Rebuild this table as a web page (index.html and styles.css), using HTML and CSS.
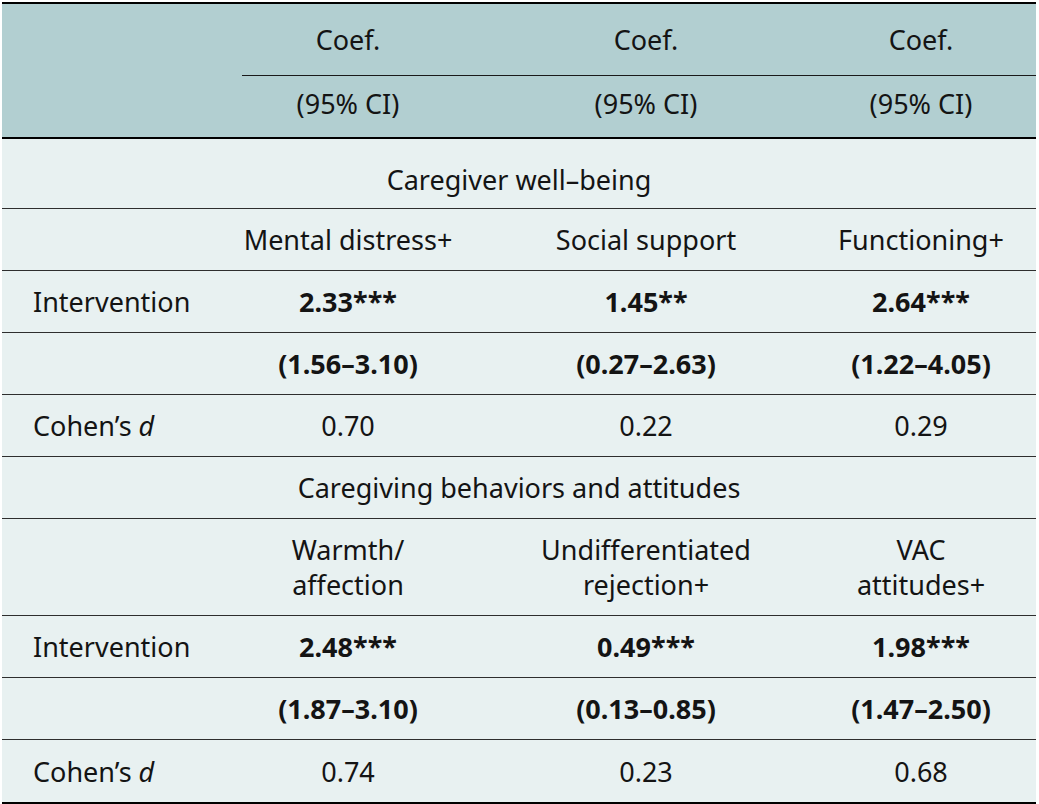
FILE: index.html
```html
<!DOCTYPE html>
<html lang="en">
<head>
<meta charset="utf-8">
<title>Intervention effects</title>
<link rel="stylesheet" href="styles.css">
</head>
<body>
<table class="results">
  <colgroup>
    <col class="c-label">
    <col class="c-one">
    <col class="c-two">
    <col class="c-three">
  </colgroup>
  <thead>
    <tr class="h-coef">
      <th class="blank"></th>
      <th class="val rule">Coef.</th>
      <th class="val rule">Coef.</th>
      <th class="val rule last">Coef.</th>
    </tr>
    <tr class="h-ci">
      <th class="blank"></th>
      <th class="val">(95% CI)</th>
      <th class="val">(95% CI)</th>
      <th class="val last">(95% CI)</th>
    </tr>
  </thead>
  <tbody>
    <tr class="section first">
      <td colspan="4" class="sec">Caregiver well–being</td>
    </tr>
    <tr class="row">
      <td class="label"></td>
      <td class="val">Mental distress+</td>
      <td class="val">Social support</td>
      <td class="val last">Functioning+</td>
    </tr>
    <tr class="row">
      <td class="label">Intervention</td>
      <td class="val b">2.33***</td>
      <td class="val b">1.45**</td>
      <td class="val b last">2.64***</td>
    </tr>
    <tr class="row">
      <td class="label"></td>
      <td class="val b">(1.56–3.10)</td>
      <td class="val b">(0.27–2.63)</td>
      <td class="val b last">(1.22–4.05)</td>
    </tr>
    <tr class="row">
      <td class="label">Cohen’s <i>d</i></td>
      <td class="val">0.70</td>
      <td class="val">0.22</td>
      <td class="val last">0.29</td>
    </tr>
    <tr class="section">
      <td colspan="4" class="sec">Caregiving behaviors and attitudes</td>
    </tr>
    <tr class="row tall">
      <td class="label"></td>
      <td class="val">Warmth/<br>affection</td>
      <td class="val">Undifferentiated<br>rejection+</td>
      <td class="val last">VAC<br>attitudes+</td>
    </tr>
    <tr class="row">
      <td class="label">Intervention</td>
      <td class="val b">2.48***</td>
      <td class="val b">0.49***</td>
      <td class="val b last">1.98***</td>
    </tr>
    <tr class="row">
      <td class="label"></td>
      <td class="val b">(1.87–3.10)</td>
      <td class="val b">(0.13–0.85)</td>
      <td class="val b last">(1.47–2.50)</td>
    </tr>
    <tr class="row end">
      <td class="label">Cohen’s <i>d</i></td>
      <td class="val">0.74</td>
      <td class="val">0.23</td>
      <td class="val last">0.68</td>
    </tr>
  </tbody>
</table>
</body>
</html>
```

FILE: styles.css
```css
html, body {
  margin: 0;
  padding: 0;
  background: #ffffff;
}

body {
  padding: 2px 0 0 2px;
  font-family: "Noto Sans", "Open Sans", "DejaVu Sans", sans-serif;
  font-size: 27px;
  color: #141414;
}

.results {
  width: 1034px;
  table-layout: fixed;
  border-collapse: collapse;
  border-top: 2px solid #000;
  border-bottom: 2px solid #000;
  background: #e8f1f1;
}

.c-label { width: 240px; }
.c-one { width: 212px; }
.c-two { width: 384px; }
.c-three { width: 198px; }

.results th,
.results td {
  padding: 0;
  font-weight: 400;
  vertical-align: middle;
  line-height: 35px;
}

.results thead {
  background: #b2cfd1;
}

.results thead tr.h-ci {
  border-bottom: 2px solid #000;
}

.h-coef th { height: 71px; }

.results .h-ci th {
  height: 55px;
  padding-bottom: 6px;
}

.results th.rule {
  border-bottom: 1px solid #1a1a1a;
}

.results .val {
  text-align: center;
}

.results .last {
  padding-right: 32px;
}

.results .label,
.results .blank {
  padding-left: 31px;
  text-align: left;
}

.results .b {
  font-weight: 700;
}

.row td,
.section td {
  border-bottom: 1px solid #2e2e2e;
  height: 61px;
}

.results .section.first td {
  height: 57px;
  padding-top: 12px;
}

.row.tall td {
  height: 96px;
}

.row.end td {
  border-bottom: none;
  height: 62px;
}

.results .sec {
  text-align: center;
}

.label i {
  font-style: italic;
}
```
